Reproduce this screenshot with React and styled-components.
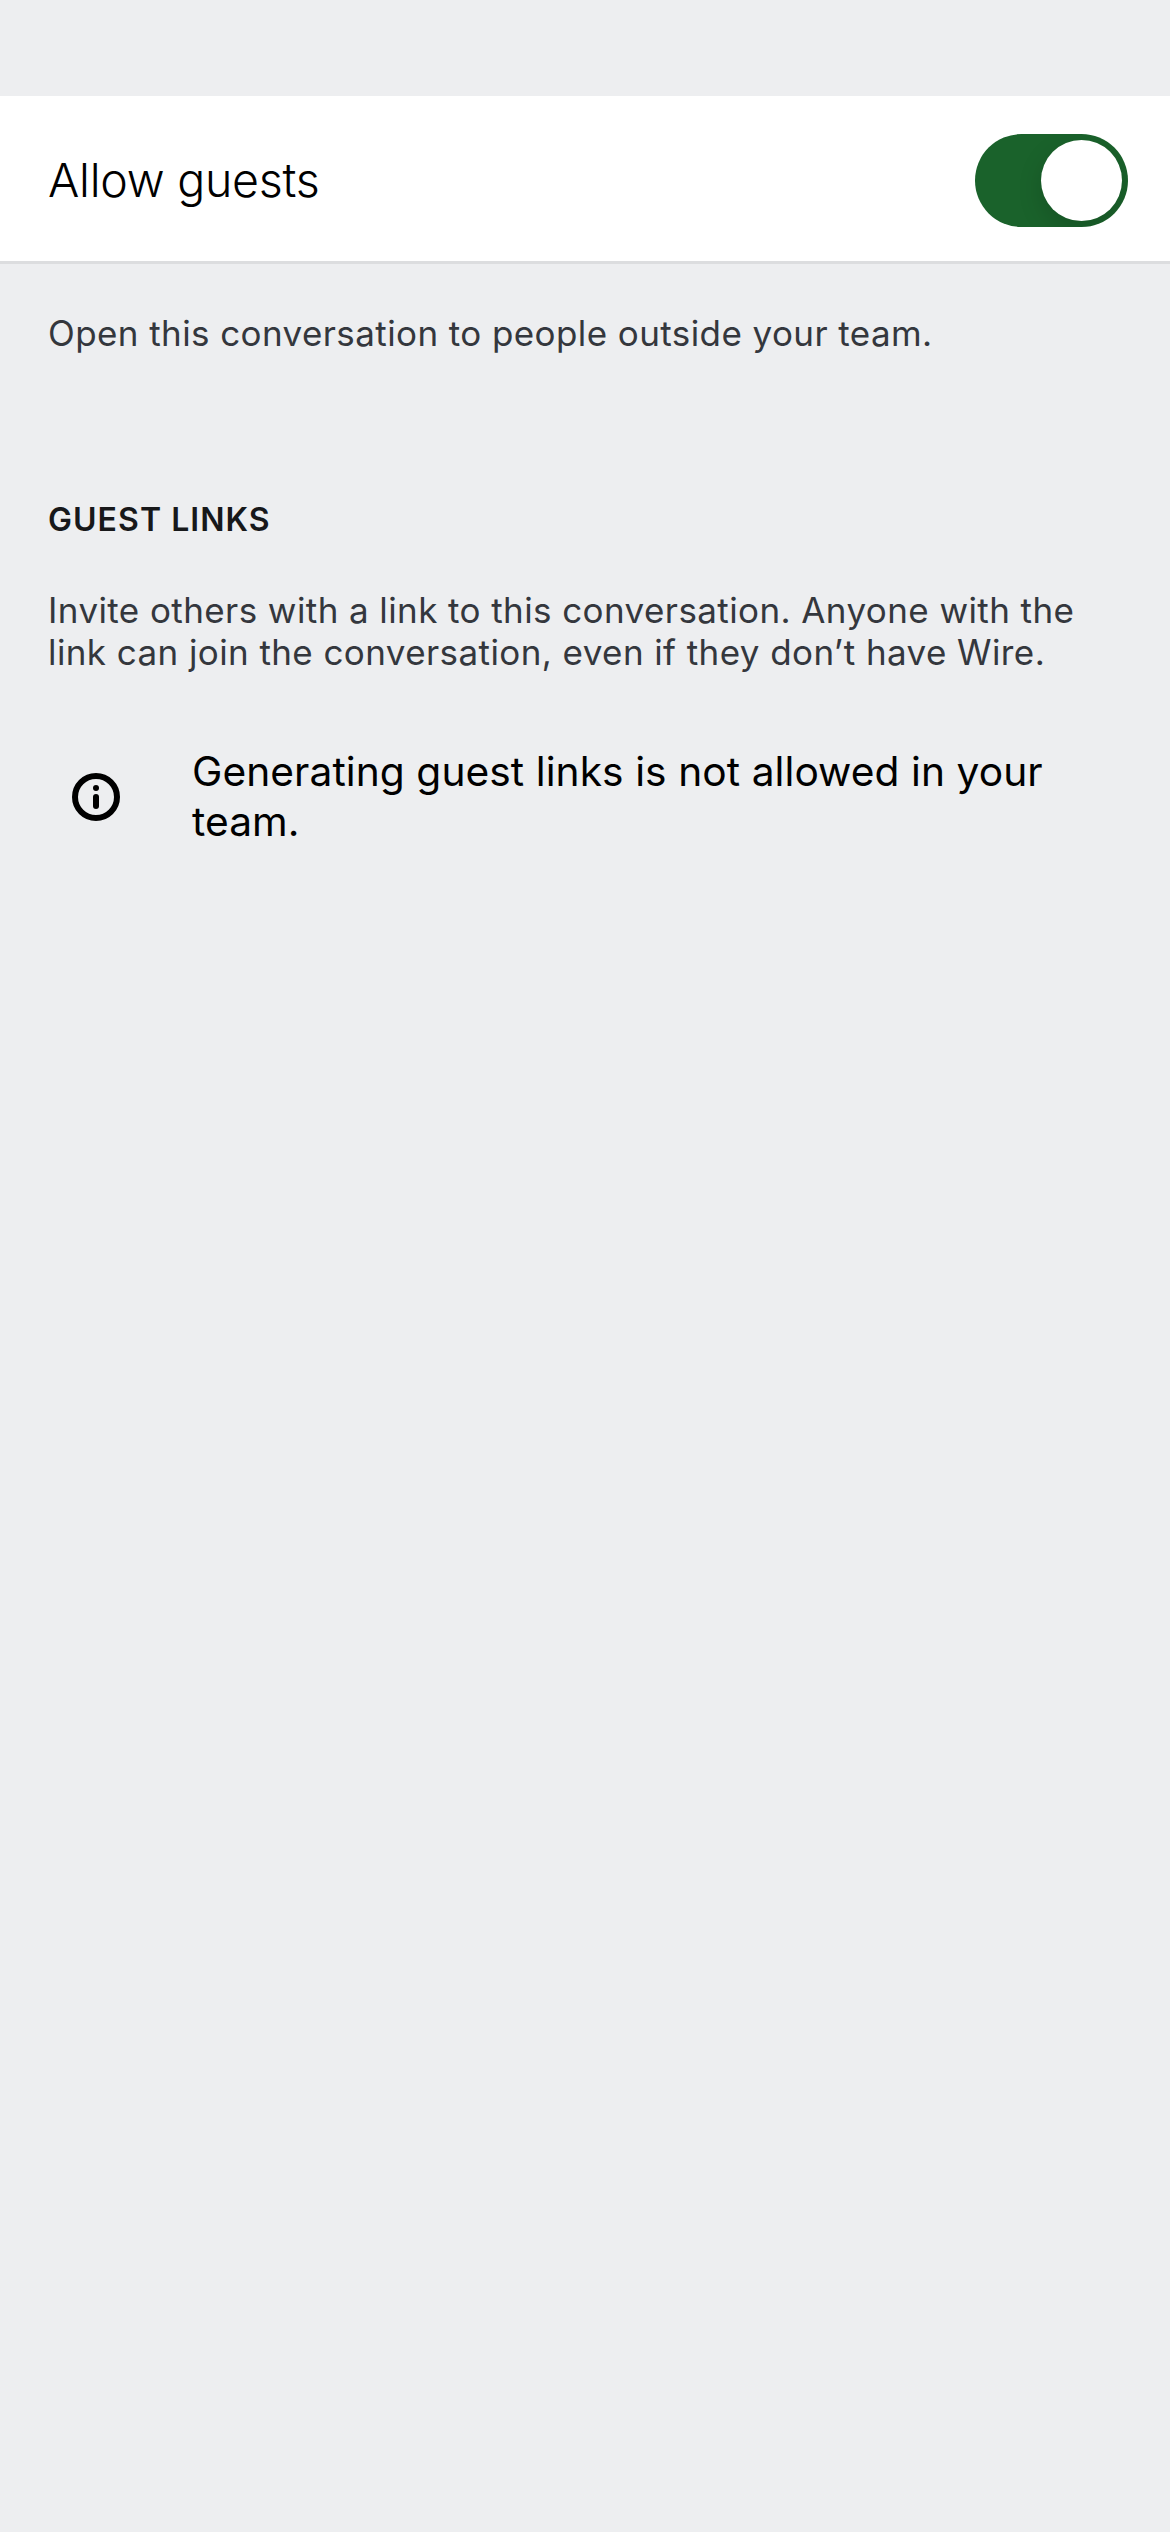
import React, { useState } from "react";
import styled, { createGlobalStyle } from "styled-components";

const GlobalStyle = createGlobalStyle`
  * {
    box-sizing: border-box;
  }
  body {
    margin: 0;
    background: #edeef0;
    font-family: Inter, "Liberation Sans", sans-serif;
    -webkit-font-smoothing: antialiased;
  }
`;

const Screen = styled.main`
  min-height: 2532px;
  padding-top: 96px;
  background: #edeef0;
`;

const OptionRow = styled.label`
  display: flex;
  align-items: center;
  justify-content: space-between;
  height: 168px;
  padding: 4px 42px 0 48px;
  background: #ffffff;
  border-bottom: 3px solid #dcdddf;
`;

const OptionTitle = styled.span`
  color: #000000;
  font-size: 46.5px;
  font-weight: 300;
  line-height: 57px;
  letter-spacing: -0.25px;
`;

const Switch = styled.button`
  display: flex;
  justify-content: ${({ $on }) => ($on ? "flex-end" : "flex-start")};
  width: 153px;
  height: 93px;
  padding: 6px;
  border: 0;
  border-radius: 47px;
  background: ${({ $on }) => ($on ? "#1a622b" : "#dcdddf")};
  overflow: hidden;
`;

const Knob = styled.span`
  width: 81px;
  height: 81px;
  border-radius: 50%;
  background: #ffffff;
  box-shadow: 0 9px 24px rgba(0, 0, 0, 0.15);
`;

const Section = styled.section`
  padding: ${({ $top }) => $top}px 48px 0;
`;

const Heading = styled.h2`
  margin: 0 0 49px;
  color: #17181a;
  font-size: 32px;
  font-weight: 600;
  line-height: 40px;
  letter-spacing: 1.05px;
`;

const Description = styled.p`
  margin: 0;
  color: #34373d;
  font-size: 35px;
  line-height: 42px;
  letter-spacing: 0.41px;
`;

const Notice = styled.div`
  display: flex;
  align-items: center;
  gap: 72px;
  padding: 74px 48px 0 72px;
`;

const InfoIcon = styled.svg`
  flex: none;
  width: 48px;
  height: 48px;
`;

const NoticeText = styled.p`
  margin: 0;
  color: #000000;
  font-size: 40.7px;
  line-height: 50px;
  letter-spacing: 0.07px;
`;

export default function App() {
  const [allowGuests, setAllowGuests] = useState(true);

  return (
    <>
      <GlobalStyle />
      <Screen>
        <OptionRow>
          <OptionTitle>Allow guests</OptionTitle>
          <Switch
            type="button"
            role="switch"
            aria-checked={allowGuests}
            $on={allowGuests}
            onClick={() => setAllowGuests(!allowGuests)}
          >
            <Knob />
          </Switch>
        </OptionRow>
        <Section $top={48}>
          <Description>Open this conversation to people outside your team.</Description>
        </Section>
        <Section $top={146}>
          <Heading>GUEST LINKS</Heading>
          <Description>
            Invite others with a link to this conversation. Anyone with the link can join the
            conversation, even if they don’t have Wire.
          </Description>
        </Section>
        <Notice>
          <InfoIcon viewBox="0 0 48 48" aria-hidden="true">
            <circle cx="24" cy="24" r="21" fill="none" stroke="#000" strokeWidth="6" />
            <circle cx="24" cy="15" r="3" />
            <rect x="21" y="21" width="6" height="15" rx="3" />
          </InfoIcon>
          <NoticeText>Generating guest links is not allowed in your team.</NoticeText>
        </Notice>
      </Screen>
    </>
  );
}
